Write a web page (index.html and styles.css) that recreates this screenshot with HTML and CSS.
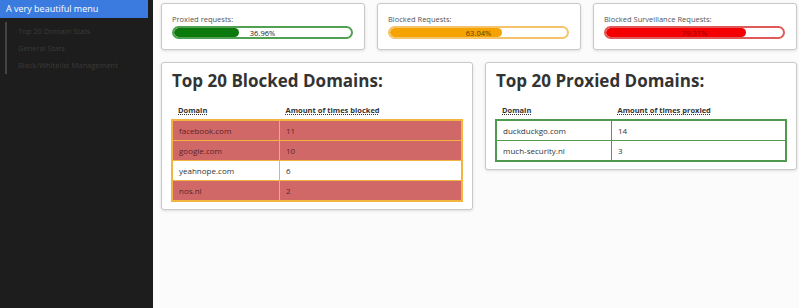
FILE: index.html
```html
<!DOCTYPE html>
<html lang="en">
<head>
    <meta charset="UTF-8">
    <title>Stats</title>
    <link rel="stylesheet" href="styles.css">
</head>
<body>
    <div class="sidebar">
        <div class="menu-title">A very beautiful menu</div>
        <ul class="menu">
            <li>Top 20 Domain Stats</li>
            <li>General Stats</li>
            <li>Black/Whitelist Management</li>
        </ul>
    </div>

    <div class="main">
        <div class="stat-row">
            <div class="card stat">
                <div class="stat-label">Proxied requests:</div>
                <div class="bar green">
                    <div class="fill" style="width:36.96%"></div>
                    <span class="pct">36.96%</span>
                </div>
            </div>
            <div class="card stat">
                <div class="stat-label">Blocked Requests:</div>
                <div class="bar orange">
                    <div class="fill" style="width:63.04%"></div>
                    <span class="pct">63.04%</span>
                </div>
            </div>
            <div class="card stat">
                <div class="stat-label">Blocked Surveillance Requests:</div>
                <div class="bar red">
                    <div class="fill" style="width:79.31%"></div>
                    <span class="pct">79.31%</span>
                </div>
            </div>
        </div>

        <div class="table-row">
            <div class="card list">
                <h2>Top 20 Blocked Domains:</h2>
                <table class="domains blocked">
                    <thead>
                        <tr><th><abbr>Domain</abbr></th><th><abbr>Amount of times blocked</abbr></th></tr>
                    </thead>
                    <tbody>
                        <tr class="hit"><td>facebook.com</td><td>11</td></tr>
                        <tr class="hit"><td>google.com</td><td>10</td></tr>
                        <tr><td>yeahnope.com</td><td>6</td></tr>
                        <tr class="hit"><td>nos.nl</td><td>2</td></tr>
                    </tbody>
                </table>
            </div>
            <div class="card list">
                <h2>Top 20 Proxied Domains:</h2>
                <table class="domains proxied">
                    <thead>
                        <tr><th><abbr>Domain</abbr></th><th><abbr>Amount of times proxied</abbr></th></tr>
                    </thead>
                    <tbody>
                        <tr><td>duckduckgo.com</td><td>14</td></tr>
                        <tr><td>much-security.nl</td><td>3</td></tr>
                    </tbody>
                </table>
            </div>
        </div>
    </div>
</body>
</html>
```

FILE: styles.css
```css
html, body {
    margin: 0;
    padding: 0;
    height: 100%;
    font-family: 'Open Sans', 'DejaVu Sans', sans-serif;
    background: #fbfbfb;
    color: #333;
}
body {
    display: flex;
}
.sidebar {
    width: 153px;
    flex-shrink: 0;
    background: #1d1d1d;
    min-height: 100vh;
}
.menu-title {
    width: 142px;
    height: 18px;
    line-height: 17px;
    background: #3b7be0;
    color: #fff;
    font-size: 9px;
    padding-left: 6px;
}
.menu {
    list-style: none;
    margin: 4px 0 0 5px;
    padding: 1px 0 0 11px;
    border-left: 2px solid #444;
    width: 120px;
}
.menu li {
    font-size: 7.5px;
    color: #3a3a3a;
    height: 17px;
    line-height: 17px;
}
.main {
    flex: 1;
    padding: 3px 2px 0 8px;
}
.card {
    background: #fff;
    border: 1px solid #c9c9c9;
    border-radius: 3px;
    box-shadow: 0 1px 3px rgba(0,0,0,0.12);
    box-sizing: border-box;
}
.stat-row {
    display: grid;
    grid-template-columns: repeat(3, 204px);
    gap: 12px;
}
.stat {
    height: 47px;
    padding: 10px 11px 0 10px;
}
.stat-label {
    font-size: 7.5px;
    color: #555;
    line-height: 10px;
    margin-bottom: 2px;
}
.bar {
    position: relative;
    height: 13px;
    border-radius: 7px;
    box-sizing: border-box;
    overflow: hidden;
    background: #fff;
}
.bar .fill {
    height: 100%;
    border-radius: 7px;
}
.bar .pct {
    position: absolute;
    left: 0;
    right: 0;
    top: 0;
    text-align: center;
    font-size: 7.5px;
    line-height: 10px;
    color: #222;
}
.green { border: 2px solid #52a052; }
.green .fill { background: #0b790b; }
.orange { border: 2px solid #f5c46a; }
.orange .fill { background: #f5a300; }
.orange .pct { color: #5a3a00; }
.red { border: 2px solid #e05a5a; }
.red .fill { background: #f50000; }
.red .pct { color: #8a0000; }
.table-row {
    display: grid;
    grid-template-columns: 312px 312px;
    align-items: start;
    gap: 12px;
    margin-top: 12px;
}
.list {
    padding: 8px 9px 7px 9px;
}
.list h2 {
    font-size: 17px;
    font-weight: 700;
    color: #333;
    margin: 0 0 14px 1px;
    line-height: 20px;
}
.domains {
    width: 100%;
    border-collapse: collapse;
    font-size: 8px;
}
.domains th {
    text-align: left;
    font-weight: 700;
    font-size: 7.5px;
    padding: 0 6px 3px 6px;
    line-height: 11px;
}
.domains abbr {
    text-decoration: underline dotted;
}
.domains td {
    height: 19px;
    padding: 0 6px;
}
.domains td:first-child, .domains th:first-child {
    width: 94px;
}
.blocked td {
    border: 1px solid #f2b640;
    color: #333;
}
.blocked tbody {
    border: 2px solid #f2b640;
}
.blocked .hit td {
    background: #d06868;
    color: #5e2424;
}
.proxied tbody {
    border: 2px solid #4f9a4f;
}
.proxied td {
    border: 1px solid #4f9a4f;
}
.proxied td:first-child, .proxied th:first-child {
    width: 102px;
}
```
